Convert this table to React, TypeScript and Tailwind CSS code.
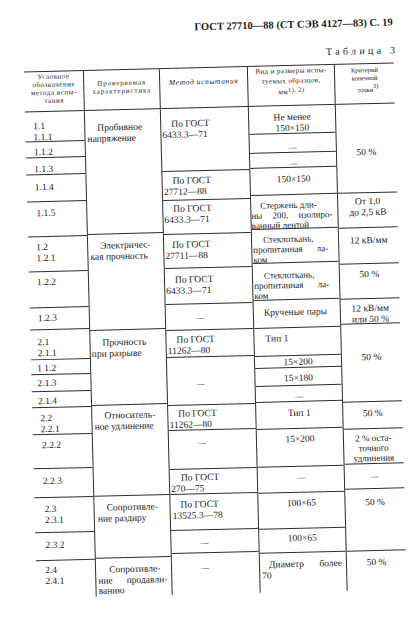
import type { ReactNode } from 'react';

// Scanned GOST table page, p. 19 (Table 3).

function Cell({ className = '', last = false, children }: { className?: string; last?: boolean; children?: ReactNode }) {
  return <div className={`${last ? '' : 'border-b border-[#2e2e2e]'} ${className}`}>{children}</div>;
}

function Spread({ words, className = '' }: { words: string[]; className?: string }) {
  return (
    <div className={`flex justify-between ${className}`}>
      {words.map((w, i) => (
        <span key={i}>{w}</span>
      ))}
    </div>
  );
}

const Dash = () => <span className="text-[8px]">—</span>;

function Gost({ num, indent = 'ml-[9px]' }: { num: string; indent?: string }) {
  return (
    <>
      <div className={indent}>По ГОСТ</div>
      <div>{num}</div>
    </>
  );
}

function Header() {
  return (
    <div className="grid h-[41px] grid-cols-[59px_76px_88px_87px_60px] border-t border-b border-[#2e2e2e] text-[7px] leading-[8px]">
      <div className="pt-[1px] text-center tracking-[0.5px]">
        Условное
        <br />
        обозначение
        <br />
        метода испы-
        <br />
        тания
      </div>
      <div className="border-l border-[#2e2e2e] pt-[9px] text-center tracking-[0.9px]">
        Проверяемая
        <br />
        характеристика
      </div>
      <div className="border-l border-[#2e2e2e] pt-[10px] text-center text-[7.5px] italic tracking-[0.6px]">
        Метод испытания
      </div>
      <div className="border-l border-[#2e2e2e] pt-[1px] text-center leading-[9.5px] tracking-[0.4px]">
        Вид и размеры испы-
        <br />
        туемых образцов,
        <div className="flex justify-center">
          <span className="mt-[2px]">мм</span>
          <span className="-mt-[1px] text-[6.5px]">1), 2)</span>
        </div>
      </div>
      <div className="border-l border-[#2e2e2e] pt-[2px] text-center text-[6.5px]">
        Критерий
        <br />
        конечной
        <div className="flex justify-center pl-[6px]">
          <span className="mt-[4px]">точки</span>
          <span>3)</span>
        </div>
      </div>
    </div>
  );
}

function Body() {
  return (
    <div className="grid h-[482px] grid-cols-[59px_76px_88px_87px_60px] text-[9.5px] leading-[10.5px]">
      {/* условное обозначение */}
      <div className="flex flex-col">
        <Cell className="h-[30px] pt-[9px] pl-[8px]">1.1<br />1.1.1</Cell>
        <Cell className="h-[16px] pt-[5px] pl-[8px]">1.1.2</Cell>
        <Cell className="h-[17px] pt-[6px] pl-[8px]">1.1.3</Cell>
        <Cell className="h-[27px] pt-[7px] pl-[8px]">1.1.4</Cell>
        <Cell className="h-[35px] pt-[6px] pl-[9px]">1.1.5</Cell>
        <Cell className="h-[35px] pt-[5px] pl-[8px]">1.2<br />1.2.1</Cell>
        <Cell className="h-[36px] pt-[5px] pl-[8px]">1.2.2</Cell>
        <Cell className="h-[22px] pt-[5px] pl-[8px]">1.2.3</Cell>
        <Cell className="h-[30px] pt-[7px] pl-[7px]">2.1<br />2.1.1</Cell>
        <Cell className="h-[15px] pt-[3px] pl-[6px]">1 1.2</Cell>
        <Cell className="h-[17px] pt-[3px] pl-[6px]">2.1.3</Cell>
        <Cell className="h-[16px] pt-[4px] pl-[6px]">2.1.4</Cell>
        <Cell className="h-[27px] pt-[5px] pl-[8px]">2.2<br />2.2.1</Cell>
        <Cell className="h-[34px] pt-[5px] pl-[9px]">2.2.2</Cell>
        <Cell className="h-[29px] pt-[7px] pl-[9px]">2.2.3</Cell>
        <Cell className="h-[35px] pt-[6px] pl-[10px]">2.3<br />2.3.1</Cell>
        <Cell className="h-[28px] pt-[7px] pl-[10px]">2.3.2</Cell>
        <Cell last className="pt-[4px] pl-[9px]">2.4<br />2.4.1</Cell>
      </div>

      {/* проверяемая характеристика */}
      <div className="flex flex-col border-l border-[#2e2e2e]">
        <Cell className="h-[124px] pt-[12px] pl-[2px]">
          <div className="ml-[10px]">Пробивное</div>
          <div>напряжение</div>
        </Cell>
        <Cell className="h-[96px] pt-[6px] pl-[2px]">
          <div className="ml-[10px]">Электричес-</div>
          <div>кая прочность</div>
        </Cell>
        <Cell className="h-[75px] pt-[7px] pl-[1px]">
          <div className="ml-[11px]">Прочность</div>
          <div>при разрыве</div>
        </Cell>
        <Cell className="h-[91px] pt-[5px] pl-[2px]">
          <div className="ml-[10px]">Относитель-</div>
          <div>ное удлинение</div>
        </Cell>
        <Cell className="h-[62px] pt-[6px] pl-[3px]">
          <div className="ml-[9px]">Сопротивле-</div>
          <div>ние раздиру</div>
        </Cell>
        <Cell last className="pt-[6px] pl-[2px] pr-[4px]">
          <div className="ml-[11px]">Сопротивле-</div>
          <Spread words={['ние', 'продавли-']} />
          <div>ванию</div>
        </Cell>
      </div>

      {/* метод испытания */}
      <div className="flex flex-col border-l border-[#2e2e2e]">
        <Cell className="h-[63px] pt-[10px] pl-[1px]"><Gost num="6433.3—71" /></Cell>
        <Cell className="h-[29px] pt-[4px] pl-[1px]"><Gost num="27712—88" /></Cell>
        <Cell className="h-[34px] pt-[3px] pl-[1px]"><Gost num="6433.3—71" /></Cell>
        <Cell className="h-[34px] pt-[5px] pl-[1px]"><Gost num="27711—88" indent="ml-[7px]" /></Cell>
        <Cell className="h-[36px] pt-[6px] pl-[1px]"><Gost num="6433.3—71" /></Cell>
        <Cell className="h-[26px] pt-[8px] pl-[30px]"><Dash /></Cell>
        <Cell className="h-[27px] pt-[4px] pl-[1px]"><Gost num="11262—80" /></Cell>
        <Cell className="h-[48px] pt-[21px] pl-[29px]"><Dash /></Cell>
        <Cell className="h-[25px] pt-[3px] pl-[1px]"><Gost num="11262—80" /></Cell>
        <Cell className="h-[39px] pt-[7px] pl-[29px]"><Dash /></Cell>
        <Cell className="h-[25px] pt-[3px] pl-[1px]"><Gost num="270—75" indent="ml-[10px]" /></Cell>
        <Cell className="h-[36px] pt-[5px] pl-[2px]"><Gost num="13525.3—78" indent="ml-[8px]" /></Cell>
        <Cell className="h-[23px] pt-[7px] pl-[29px]"><Dash /></Cell>
        <Cell last className="pt-[9px] pl-[29px]"><Dash /></Cell>
      </div>

      {/* вид и размеры образцов */}
      <div className="flex flex-col border-l border-[#2e2e2e]">
        <Cell className="h-[28px] pt-[6px] text-center">Не менее<br />150×150</Cell>
        <Cell className="h-[19px] pt-[8px] text-center"><Dash /></Cell>
        <Cell className="h-[15px] pt-[5px] text-center"><Dash /></Cell>
        <Cell className="h-[27px] pt-[6px] text-center">150×150</Cell>
        <Cell className="h-[34px] pt-[5px] pr-[5px] text-[9px] leading-[10px]">
          <div className="ml-[9px]">Стержень дли-</div>
          <Spread words={['ны', '200,', 'изолиро-']} />
          <div>ванный лентой</div>
        </Cell>
        <Cell className="h-[34px] pt-[5px] pl-[1px] pr-[10px] text-[9px] leading-[10px]">
          <div className="ml-[10px]">Стеклоткань,</div>
          <Spread words={['пропитанная', 'ла-']} />
          <div>ком</div>
        </Cell>
        <Cell className="h-[37px] pt-[7px] pl-[1px] pr-[10px] text-[9px] leading-[10px]">
          <div className="ml-[10px]">Стеклоткань,</div>
          <Spread words={['пропитанная', 'ла-']} />
          <div>ком</div>
        </Cell>
        <Cell className="h-[28px] pt-[7px] pl-[10px]">Крученые пары</Cell>
        <Cell className="h-[28px] pt-[5px] pl-[11px]">Тип 1</Cell>
        <Cell className="h-[12px] pt-[1px] text-center">15×200</Cell>
        <Cell className="h-[18px] pt-[5px] text-center">15×180</Cell>
        <Cell className="h-[16px] pt-[5px] text-center"><Dash /></Cell>
        <Cell className="h-[27px] pt-[6px] text-center">Тип 1</Cell>
        <Cell className="h-[38px] pt-[5px] text-center">15×200</Cell>
        <Cell className="h-[26px] pt-[5px] text-center"><Dash /></Cell>
        <Cell className="h-[36px] pt-[5px] text-center">100×65</Cell>
        <Cell className="h-[24px] pt-[4px] text-center">100×65</Cell>
        <Cell last className="pt-[6px] pl-[2px] pr-[4px]">
          <Spread words={['Диаметр', 'более']} className="ml-[7px]" />
          <div>70</div>
        </Cell>
      </div>

      {/* критерий конечной точки */}
      <div className="flex flex-col border-l border-[#2e2e2e] text-center">
        <Cell className="h-[89px] pt-[43px]">50 %</Cell>
        <Cell className="h-[35px] pt-[3px] leading-[11px]">От 1,0<br />до 2,5 кВ</Cell>
        <Cell className="h-[36px] pt-[7px]">12 кВ/мм</Cell>
        <Cell className="h-[35px] pt-[5px]">50 %</Cell>
        <Cell className="h-[25px] pt-[4px]">12 кВ/мм<br />или 50 %</Cell>
        <Cell className="h-[78px] pt-[28px]">50 %</Cell>
        <Cell className="h-[27px] pt-[6px]">50 %</Cell>
        <Cell className="h-[35px] pt-[4px] text-[9px] leading-[10px]">2 % оста-<br />точного<br />удлинения</Cell>
        <Cell className="h-[25px] pt-[7px]"><Dash /></Cell>
        <Cell className="h-[62px] pt-[8px]">50 %</Cell>
        <Cell last className="pt-[6px]">50 %</Cell>
      </div>
    </div>
  );
}

export default function App() {
  return (
    <div className="h-[640px] w-[419px] overflow-hidden bg-white font-['Liberation_Serif',serif] text-[#1d1d1d]">
      <div className="h-full w-full rotate-[-1.4deg] pl-[30px] pt-[20px]">
        <div className="w-[370px]">
          <div className="h-[13px] text-right text-[10.5px] font-bold leading-[13px]">
            ГОСТ 27710—88 (СТ СЭВ 4127—83) С. 19
          </div>
          <div className="-mr-[5px] mt-[16px] h-[12px] text-right text-[10px] leading-[12px] tracking-[3.3px]">
            Таблица 3
          </div>
          <div className="mt-[6px]">
            <Header />
            <Body />
          </div>
        </div>
      </div>
    </div>
  );
}
